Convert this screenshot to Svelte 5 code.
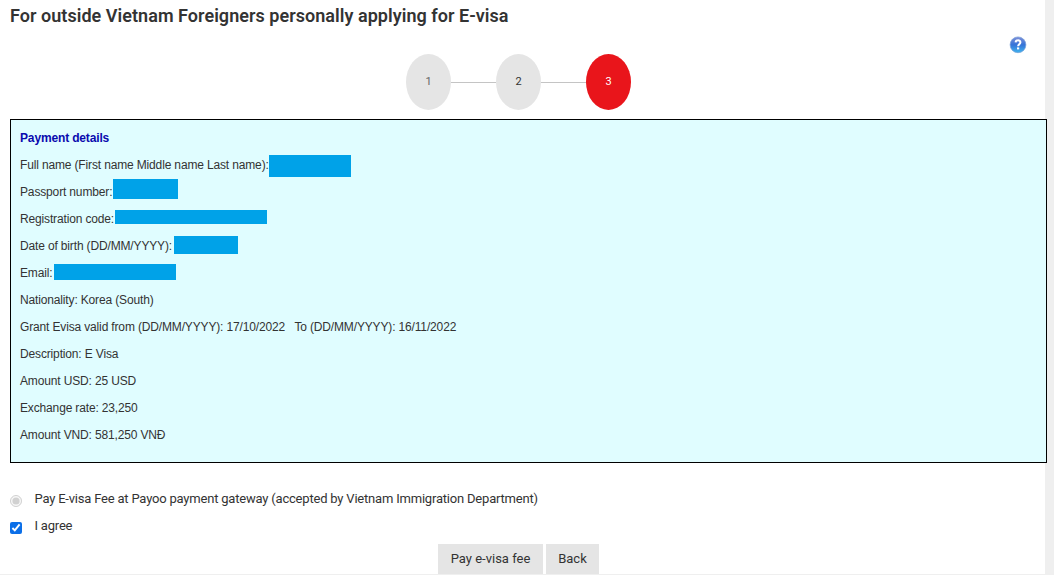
<script lang="ts">
  const steps = [1, 2, 3];
  const current = 3;

  const details = [
    { label: "Full name (First name Middle name Last name):", mask: "name" },
    { label: "Passport number:", mask: "passport" },
    { label: "Registration code:", mask: "code" },
    { label: "Date of birth (DD/MM/YYYY):", mask: "birth" },
    { label: "Email:", mask: "email" },
    { label: "Nationality: Korea (South)" },
    { label: "Grant Evisa valid from (DD/MM/YYYY): 17/10/2022\u00a0\u00a0 To (DD/MM/YYYY): 16/11/2022" },
    { label: "Description: E Visa" },
    { label: "Amount USD: 25 USD" },
    { label: "Exchange rate: 23,250" },
    { label: "Amount VND: 581,250 VNĐ" },
  ];

  let agreed = $state(true);
</script>

<div class="page">
  <main>
    <h1>For outside Vietnam Foreigners personally applying for E-visa</h1>

    <div class="top">
      <ol class="steps">
        {#each steps as step}
          <li class:first={step === 1} class:active={step === current}>{step}</li>
        {/each}
      </ol>
      <svg class="help" viewBox="0 0 18 18" role="img" aria-label="Help">
        <defs>
          <linearGradient id="ball" x1="0" y1="0" x2="0" y2="1">
            <stop offset="0" stop-color="#7f8fd8" />
            <stop offset=".5" stop-color="#3573d8" />
            <stop offset="1" stop-color="#3fb4ee" />
          </linearGradient>
        </defs>
        <circle cx="9" cy="8.8" r="7.9" fill="url(#ball)" stroke="#78a0d8" stroke-width=".7" />
        <path d="M6.6 6.4C6.8 3.6 11.5 3.7 11.4 6.4C11.3 8.2 9.2 8.3 9.1 10.3" fill="none" stroke="#fff" stroke-width="2" />
        <rect x="8" y="11.4" width="2.2" height="2" fill="#fff" />
      </svg>
    </div>

    <section class="details">
      <h2>Payment details</h2>
      {#each details as row}
        <p>{row.label}{#if row.mask}<span class="mask {row.mask}"></span>{/if}</p>
      {/each}
    </section>

    <div class="options">
      <label>
        <input type="radio" name="gateway" checked disabled />
        <span>Pay E-visa Fee at Payoo payment gateway (accepted by Vietnam Immigration Department)</span>
      </label>
      <label>
        <input type="checkbox" bind:checked={agreed} />
        <span>I agree</span>
      </label>
    </div>

    <div class="actions">
      <button class="pay">Pay e-visa fee</button>
      <button class="back">Back</button>
    </div>
  </main>
</div>

<style>
:global(body){margin:0;background:#efefef;overflow:hidden}
.page{
  box-sizing:border-box;height:575px;padding-right:9px;
  font-family:Roboto,"Liberation Sans",sans-serif;color:#333;
}
main{
  box-sizing:border-box;height:574px;padding-left:10px;
  background:#fff;display:flex;flex-direction:column;
}
h1{margin:0;height:32px;font-size:18px;line-height:32px;font-weight:600;letter-spacing:.04px;white-space:nowrap}

.top{display:flex;justify-content:space-between;height:87px}
.steps{display:flex;gap:45px;margin:22px 0 0 396px;padding:0;list-style:none}
.steps li{
  position:relative;width:45px;height:56px;border-radius:50%;
  background:#e5e5e5;font-size:11px;line-height:55px;text-align:center;
}
.steps li + li::before{
  content:"";position:absolute;left:-45px;top:28px;
  width:45px;height:1px;background:#c4c4c4;
}
.steps .first{color:#666}
.steps .active{background:#e9151b;color:#fff}
.help{width:18px;height:18px;margin:4px 18px 0 0}

.details{
  box-sizing:border-box;width:1037px;height:344px;flex:none;
  padding:5px 9px;border:1px solid #000;background:#e0fdff;
  font-family:"Liberation Sans",Arial,sans-serif;font-size:12px;letter-spacing:-.15px;
}
.details h2{margin:0;font-size:12px;line-height:27px;color:#0a0aae}
.details p{display:flex;height:27px;margin:0;line-height:27px;white-space:pre}
.mask{flex:none;background:#00a2e8}
.name{width:82px;height:22px;margin:3px 0 0 0}
.passport{width:65px;height:20px;margin:0 0 0 1px}
.code{width:152px;height:14px;margin:4px 0 0 1px}
.birth{width:64px;height:18px;margin:3px 0 0 2px}
.email{width:122px;height:16px;margin:4px 0 0 2px}

.options{margin-top:23px;font-size:13px;letter-spacing:-.2px}
.options label{display:flex;height:27px;line-height:26px}
.options input{width:12px;height:12px;margin:9px 12.5px 0 0;flex:none}
.options input[type="checkbox"]{accent-color:#0b6fe8}

.actions{display:flex;gap:3px;margin:4px 0 0 428px}
button{
  height:30px;padding:0 0 2px;border:0;background:#e5e5e5;
  font:13px Roboto,"Liberation Sans",sans-serif;color:#333;
}
.pay{width:105px}
.back{width:53px}
</style>
